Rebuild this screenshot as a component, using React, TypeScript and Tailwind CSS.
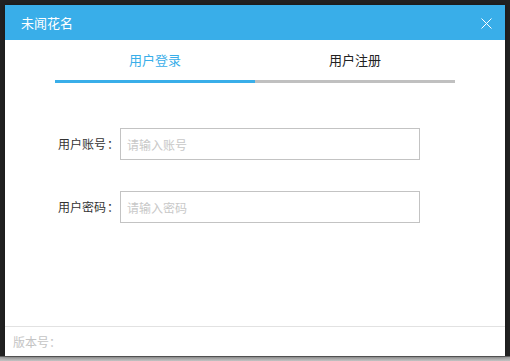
const font = { fontFamily: '"Noto Sans CJK SC", "Liberation Sans", sans-serif' };

function Field({ label, placeholder }: { label: string; placeholder: string }) {
  return (
    <div className="flex items-center">
      <label className="w-[115px] flex justify-end text-[12px] text-[#333]">
        {label}
        <span className="w-[14px] text-center">：</span>
      </label>
      <input
        type="text"
        placeholder={placeholder}
        className="w-[300px] h-[32px] border border-[#c3c3c3] px-[6px] text-[12px] text-[#333] placeholder:text-[#c8c8c8] outline-none"
      />
    </div>
  );
}

export default function App() {
  return (
    <div
      style={font}
      className="w-[510px] h-[361px] overflow-hidden pt-[5px] pl-[5px] bg-[linear-gradient(to_bottom,#222_0,#222_356px,#9a9a9a_357px,#c4c4c4_361px)]"
    >
      <div className="w-[500px] h-[351px] bg-white flex flex-col shadow-[0_0_4px_rgba(0,0,0,0.35)]">
        <div className="h-[35px] bg-[#39aee9] flex items-center justify-between pl-[16px] pr-[13px]">
          <span className="text-[13px] text-white">未闻花名</span>
          <svg width="11" height="11" viewBox="0 0 11 11" className="mt-[1px]">
            <path d="M0.5 0.5 L10.5 10.5 M10.5 0.5 L0.5 10.5" stroke="white" strokeWidth="1" fill="none" />
          </svg>
        </div>

        <div className="flex px-[50px]">
          <div className="w-[200px] flex flex-col">
            <div className="h-[40px] flex items-center justify-center text-[13px] text-[#39aee9]">用户登录</div>
            <div className="h-[3px] bg-[#39aee9]" />
          </div>
          <div className="w-[200px] flex flex-col">
            <div className="h-[40px] flex items-center justify-center text-[13px] text-[#222]">用户注册</div>
            <div className="h-[3px] bg-[#c0c0c0]" />
          </div>
        </div>

        <div className="flex-1 flex flex-col gap-[31px] pt-[45px]">
          <Field label="用户账号" placeholder="请输入账号" />
          <Field label="用户密码" placeholder="请输入密码" />
        </div>

        <div className="h-[30px] border-t border-[#e2e2e2] flex items-center pl-[8px] text-[12px] text-[#c4c4c4]">
          版本号：
        </div>
      </div>
    </div>
  );
}
